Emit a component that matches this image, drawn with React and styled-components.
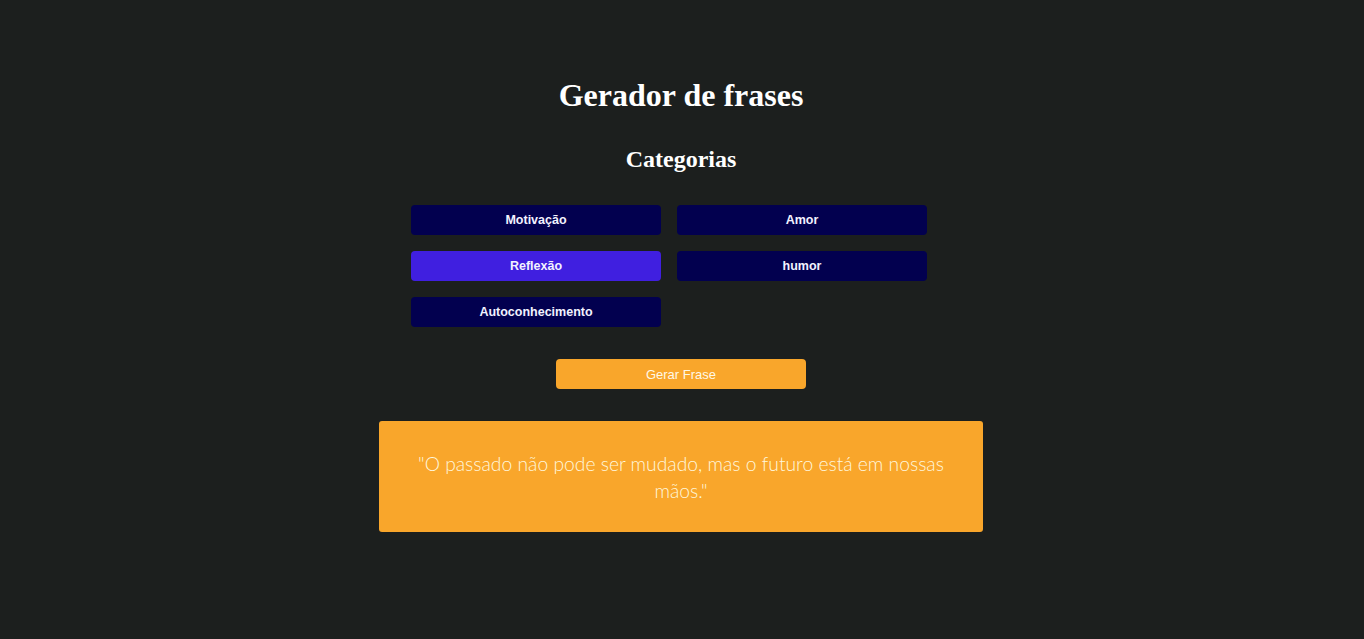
import React, { useState } from "react";
import styled, { createGlobalStyle } from "styled-components";

const Global = createGlobalStyle`
  html, body { margin: 0; padding: 0; background: #1c1f1e; }
  body { font-family: "Liberation Serif", serif; color: #fff; }
`;

const Page = styled.main`
  min-height: 639px;
  display: flex;
  flex-direction: column;
  align-items: center;
  padding-top: 56px;
  padding-right: 2px;
  box-sizing: border-box;
`;

const Title = styled.h1`
  font-family: "Liberation Serif", serif;
  font-size: 32px;
  font-weight: bold;
  margin: 21px 0 0;
  line-height: 37px;
`;

const Subtitle = styled.h2`
  font-family: "Liberation Serif", serif;
  font-size: 24px;
  font-weight: bold;
  margin: 31px 0 0;
  line-height: 28px;
`;

const Grid = styled.div`
  width: 542px;
  margin-top: 32px;
  margin-left: 2px;
  display: grid;
  grid-template-columns: 250px 250px;
  gap: 16px;
`;

const CatButton = styled.button`
  height: 30px;
  border: none;
  border-radius: 4px;
  background: ${(p) => (p.$active ? "#401fe0" : "#02004f")};
  color: #f2f2ff;
  font-family: "Liberation Sans", Arial, sans-serif;
  font-weight: bold;
  font-size: 12.5px;
  cursor: pointer;
`;

const Generate = styled.button`
  margin-top: 32px;
  width: 250px;
  height: 30px;
  border: none;
  border-radius: 4px;
  background: #f9a62b;
  color: #fff8e6;
  font-family: "Liberation Sans", Arial, sans-serif;
  font-size: 13px;
  cursor: pointer;
`;

const QuoteBox = styled.div`
  margin-top: 32px;
  width: 604px;
  height: 111px;
  box-sizing: border-box;
  padding: 0 36px;
  background: #f9a62b;
  border-radius: 3px;
  display: flex;
  align-items: center;
  justify-content: center;
`;

const QuoteText = styled.p`
  margin: 0;
  text-align: center;
  font-family: Lato, sans-serif;
  font-weight: 300;
  font-size: 19.3px;
  line-height: 27px;
  color: #fff6dc;
`;

const categories = ["Motivação", "Amor", "Reflexão", "humor", "Autoconhecimento"];

export default function App() {
  const [active, setActive] = useState("Reflexão");
  return (
    <>
      <Global />
      <Page>
        <Title>Gerador de frases</Title>
        <Subtitle>Categorias</Subtitle>
        <Grid>
          {categories.map((c) => (
            <CatButton key={c} $active={c === active} onClick={() => setActive(c)}>
              {c}
            </CatButton>
          ))}
        </Grid>
        <Generate>Gerar Frase</Generate>
        <QuoteBox>
          <QuoteText>"O passado não pode ser mudado, mas o futuro está em nossas mãos."</QuoteText>
        </QuoteBox>
      </Page>
    </>
  );
}
